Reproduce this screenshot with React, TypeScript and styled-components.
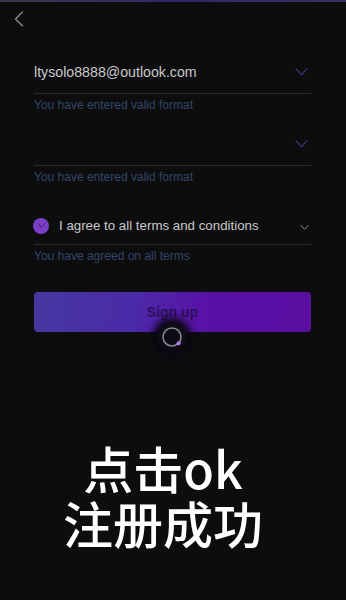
import React from "react"
import styled, { createGlobalStyle } from "styled-components"

const GlobalStyle = createGlobalStyle`
  html, body {
    margin: 0;
    padding: 0;
    background: #0d0d0e;
  }
  * {
    box-sizing: border-box;
  }
`

const Check = ({ color, size }: { color: string; size: number }) => (
  <svg width={size} height={size * 0.75} viewBox="0 0 16 12" fill="none">
    <path d="M1.5 2.5 L8 9.5 L14.5 2.5" stroke={color} strokeWidth="1.6" strokeLinecap="round" strokeLinejoin="round" />
  </svg>
)

const App = () => {
  return (
    <>
      <GlobalStyle />
      <Screen>
        <TopStrip />
        <Header>
          <BackButton>
            <svg width="10" height="16" viewBox="0 0 10 16" fill="none">
              <path d="M8.5 1 L1.5 8 L8.5 15" stroke="#8a8a8e" strokeWidth="1.4" strokeLinecap="round" strokeLinejoin="round" />
            </svg>
          </BackButton>
        </Header>
        <Form>
          <Field>
            <Value>ltysolo8888@outlook.com</Value>
            <Check color="#3e3068" size={13} />
          </Field>
          <Hint>You have entered valid format</Hint>

          <Field gap={11}>
            <Value />
            <Check color="#3e3068" size={13} />
          </Field>
          <Hint>You have entered valid format</Hint>

          <AgreeField gap={18}>
            <CheckCircle>
              <Check color="#3a1a6a" size={9} />
            </CheckCircle>
            <AgreeText>I agree to all terms and conditions</AgreeText>
            <Toggle>
              <Check color="#9a9aa0" size={9} />
            </Toggle>
          </AgreeField>
          <Hint>You have agreed on all terms</Hint>

          <ButtonWrap>
            <SignUp>Sign up</SignUp>
            <Spinner>
              <svg width="30" height="30" viewBox="0 0 30 30">
                <circle cx="15" cy="15" r="9" stroke="#8c8c90" strokeWidth="1.5" fill="none" />
                <circle cx="21.6" cy="21.2" r="2" fill="#b07ee8" />
              </svg>
            </Spinner>
          </ButtonWrap>
        </Form>
        <Caption>
          <CaptionLine>点击ok</CaptionLine>
          <CaptionLine>注册成功</CaptionLine>
        </Caption>
      </Screen>
    </>
  )
}

export default App

const Screen = styled.div`
  width: 346px;
  height: 600px;
  background: #0d0d0e;
  display: flex;
  flex-direction: column;
  overflow: hidden;
  font-family: "Liberation Sans", "Noto Sans", Arial, sans-serif;
`

const TopStrip = styled.div`
  height: 2px;
  background: linear-gradient(90deg, #3a3a4a, #2c2a6a 50%, #3a2e62);
`

const Header = styled.div`
  height: 36px;
  display: flex;
  align-items: center;
  padding-left: 14px;
`

const BackButton = styled.div`
  display: flex;
  align-items: center;
  margin-top: -2px;
`

const Form = styled.div`
  display: flex;
  flex-direction: column;
  padding: 13px 35px 0 34px;
`

interface GapProps {
  gap?: number
}

const Field = styled.div<GapProps>`
  height: 43px;
  margin-top: ${props => props.gap || 0}px;
  display: flex;
  align-items: center;
  justify-content: space-between;
  padding-right: 3px;
  border-bottom: 1px solid #2a2a2d;
`

const Value = styled.div`
  font-size: 14.2px;
  color: #c9c9cc;
`

const Hint = styled.div`
  margin-top: 4px;
  font-size: 12px;
  line-height: 14px;
  color: #34456a;
`

const AgreeField = styled(Field)`
  justify-content: flex-start;
  padding-top: 5px;
  padding-right: 0;
`

const CheckCircle = styled.div`
  width: 16px;
  height: 16px;
  border-radius: 50%;
  background: #7a3fc4;
  display: flex;
  align-items: center;
  justify-content: center;
  margin-left: -1px;
`

const AgreeText = styled.div`
  margin-left: 10px;
  font-size: 13.3px;
  color: #c9c9cc;
  flex: 1;
`

const Toggle = styled.div`
  display: flex;
  align-items: center;
  margin-right: 2px;
  margin-top: 3px;
`

const ButtonWrap = styled.div`
  position: relative;
  margin-top: 29px;
`

const SignUp = styled.div`
  height: 40px;
  border-radius: 4px;
  background: linear-gradient(100deg, #4637a0 0%, #4a2ba8 35%, #5812a6 60%, #5a0ea2 100%);
  display: flex;
  align-items: center;
  justify-content: center;
  font-size: 14px;
  font-weight: bold;
  color: #2c0f5a;
`

const Spinner = styled.div`
  position: absolute;
  left: 123px;
  top: 30px;
  width: 30px;
  height: 30px;
  border-radius: 50%;
  background: #0e0a16;
  box-shadow: 0 0 6px 5px rgba(10, 6, 18, 0.85);
  display: flex;
  align-items: center;
  justify-content: center;
`

const Caption = styled.div`
  margin-top: 108px;
  padding-right: 20px;
  display: flex;
  flex-direction: column;
  align-items: center;
  font-family: "Noto Sans CJK SC", "Noto Sans", sans-serif;
  font-size: 50px;
  font-weight: 500;
  color: #ffffff;
`

const CaptionLine = styled.div`
  height: 55px;
  line-height: 55px;
`
